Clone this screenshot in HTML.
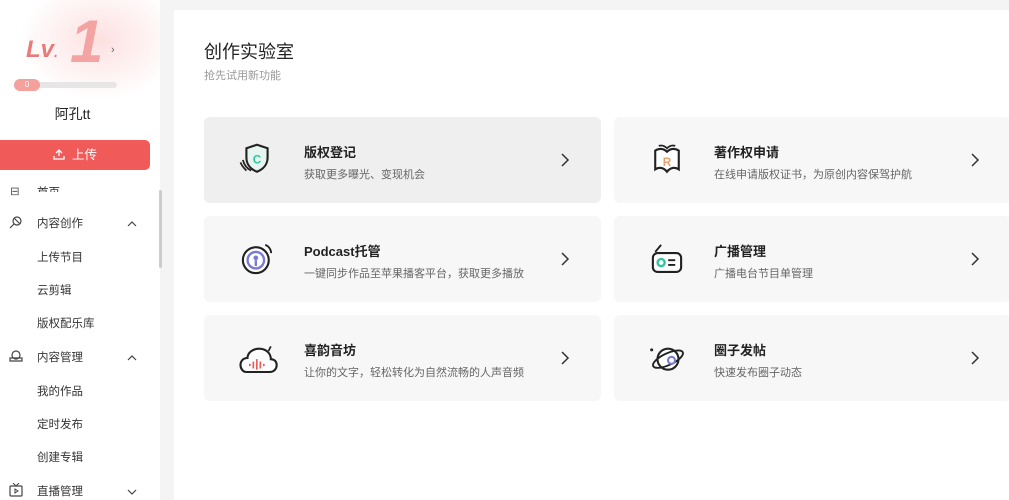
<!DOCTYPE html>
<html><head><meta charset="utf-8"><style>
*{margin:0;padding:0;box-sizing:border-box}
body{width:1009px;height:500px;overflow:hidden;background:#f4f4f5;font-family:"Liberation Sans","Noto Sans CJK SC",sans-serif;color:#333;position:relative}
.side{position:absolute;left:0;top:0;width:160px;height:500px;background:#fff}
.sb{position:absolute;left:159px;top:190px;width:3px;height:78px;background:#ccc;border-radius:2px}
.main{position:absolute;left:174px;top:10px;width:835px;height:490px;background:#fff}
.card{position:absolute;width:397px;height:86px;background:#f7f7f7;border-radius:6px}
.card .t{position:absolute;left:100px;top:25px;font-size:13px;font-weight:bold;color:#222}
.card .d{position:absolute;left:100px;top:49px;font-size:11px;color:#666}
.card .a{position:absolute;left:356px;top:36px}
.card svg.i{position:absolute;left:33px;top:25px}
.nav{position:absolute;font-size:11.5px;color:#333}
.chev{position:absolute;left:127px}
</style></head><body>
<div class="side">
 <div style="position:absolute;left:0;top:0;width:160px;height:100px;background:radial-gradient(ellipse 80px 60px at 100px 40px,#fde0e0 0,#fff 100%)"></div>
 <div style="position:absolute;left:26px;top:36px;font-size:24px;font-style:italic;font-weight:bold;color:#e87a78">Lv<span style="font-size:14px">.</span></div>
 <div style="position:absolute;left:70px;top:10px;font-size:60px;font-style:italic;font-weight:bold;color:#f3a4a2;line-height:64px">1</div>
 <div style="position:absolute;left:111px;top:44px;font-size:11px;color:#666">›</div>
 <div style="position:absolute;left:15px;top:82px;width:102px;height:6px;background:#e6e6e6;border-radius:3px"></div>
 <div style="position:absolute;left:14px;top:79px;width:26px;height:12px;background:#f4a09d;border-radius:6px;color:#fff;font-size:8px;text-align:center;line-height:12px">0</div>
 <div style="position:absolute;left:0;width:145px;top:104px;text-align:center;font-size:14px;color:#222">阿孔tt</div>
 <div style="position:absolute;left:0;top:140px;width:150px;height:30px;background:#f05a58;border-radius:0 5px 5px 0;color:#fff;font-size:12.5px;line-height:30px;text-align:center"><svg width="12" height="12" viewBox="0 0 12 12" style="vertical-align:-1px"><path d="M6 8V2M3 5l3-3 3 3M1 8v3h10V8" stroke="#fff" stroke-width="1.3" fill="none"/></svg>&nbsp; 上传</div>
 <div class="nav" style="left:10px;top:184px;color:#555">⊟</div>
 <div class="nav" style="left:37px;top:184px;height:8px;overflow:hidden">首页</div>
 <svg class="nav" style="left:9px;top:215px" width="14" height="14" viewBox="0 0 14 14"><circle cx="8" cy="6" r="4" fill="none" stroke="#444" stroke-width="1.2"/><path d="M5 9l-4 4M5 3l6 6" stroke="#444" stroke-width="1.2"/></svg>
 <div class="nav" style="left:37px;top:215px">内容创作</div><svg class="chev" style="top:221px" width="10" height="6"><path d="M1 5l4-4 4 4" stroke="#444" stroke-width="1.2" fill="none"/></svg>
 <div class="nav" style="left:37px;top:249px">上传节目</div>
 <div class="nav" style="left:37px;top:282px">云剪辑</div>
 <div class="nav" style="left:37px;top:315px">版权配乐库</div>
 <svg class="nav" style="left:9px;top:349px" width="14" height="14" viewBox="0 0 14 14"><circle cx="7" cy="6" r="4" fill="none" stroke="#444" stroke-width="1.2"/><path d="M1 12h12v-3H1z" fill="none" stroke="#444" stroke-width="1.2"/></svg>
 <div class="nav" style="left:37px;top:349px">内容管理</div><svg class="chev" style="top:355px" width="10" height="6"><path d="M1 5l4-4 4 4" stroke="#444" stroke-width="1.2" fill="none"/></svg>
 <div class="nav" style="left:37px;top:383px">我的作品</div>
 <div class="nav" style="left:37px;top:416px">定时发布</div>
 <div class="nav" style="left:37px;top:449px">创建专辑</div>
 <svg class="nav" style="left:9px;top:483px" width="14" height="14" viewBox="0 0 14 14"><rect x="1" y="3" width="12" height="10" rx="1" fill="none" stroke="#444" stroke-width="1.2"/><path d="M4 0l3 3 3-3M6 6v4l3-2z" stroke="#444" stroke-width="1" fill="none"/></svg>
 <div class="nav" style="left:37px;top:483px">直播管理</div><svg class="chev" style="top:489px" width="10" height="6"><path d="M1 1l4 4 4-4" stroke="#444" stroke-width="1.2" fill="none"/></svg>
</div>
<div class="sb"></div>
<div class="main">
 <div style="position:absolute;left:30px;top:28px;font-size:18px;color:#222">创作实验室</div>
 <div style="position:absolute;left:30px;top:57px;font-size:11px;color:#999">抢先试用新功能</div>
</div>
<div style="position:absolute;left:0;top:0;width:1009px;height:500px">
<div class="card" style="left:204px;top:117px;background:#efefef">
 <svg class="i" width="40" height="36" viewBox="0 0 34 30"><path d="M17 2l9 3v8c0 6-4 10-9 12c-5-2-9-6-9-12V5z" fill="#e6f5ef" stroke="#222" stroke-width="1.8"/><path d="M5 15c1 4 3 7 7 9M3 17c1 3 3 5 5 7" stroke="#222" stroke-width="1.5" fill="none"/><text x="17" y="18" font-size="10" font-weight="bold" fill="#2bc6a0" text-anchor="middle" font-family="Liberation Sans">C</text></svg>
 <div class="t">版权登记</div><div class="d">获取更多曝光、变现机会</div>
 <svg class="a" width="10" height="14"><path d="M2 1l6 6-6 6" stroke="#333" stroke-width="1.5" fill="none"/></svg></div>
<div class="card" style="left:614px;top:117px">
 <svg class="i" width="40" height="36" viewBox="0 0 34 30"><path d="M7 7c3-2 7-2 10 1c3-3 7-3 10-1v16c-3-2-7-2-10 2c-3-4-7-4-10-2z" fill="#fff" stroke="#222" stroke-width="1.8"/><path d="M10 3c3-1 5 0 7 2c2-2 4-3 7-2" stroke="#222" stroke-width="1.5" fill="none"/><text x="17" y="20" font-size="10" font-weight="bold" fill="#e8a06a" text-anchor="middle" font-family="Liberation Sans">R</text></svg>
 <div class="t">著作权申请</div><div class="d">在线申请版权证书，为原创内容保驾护航</div>
 <svg class="a" width="10" height="14"><path d="M2 1l6 6-6 6" stroke="#333" stroke-width="1.5" fill="none"/></svg></div>
<div class="card" style="left:204px;top:216px">
 <svg class="i" width="40" height="36" viewBox="0 0 34 30"><circle cx="16" cy="16" r="11" fill="#fff" stroke="#222" stroke-width="1.8"/><circle cx="16" cy="16" r="7" fill="none" stroke="#7a78d8" stroke-width="2"/><circle cx="16" cy="14" r="2" fill="#7a78d8"/><path d="M16 16v5" stroke="#7a78d8" stroke-width="2"/><path d="M24 3c3 1 5 4 5 7" stroke="#222" stroke-width="1.6" fill="none"/></svg>
 <div class="t">Podcast托管</div><div class="d">一键同步作品至苹果播客平台，获取更多播放</div>
 <svg class="a" width="10" height="14"><path d="M2 1l6 6-6 6" stroke="#333" stroke-width="1.5" fill="none"/></svg></div>
<div class="card" style="left:614px;top:216px">
 <svg class="i" width="40" height="36" viewBox="0 0 34 30"><rect x="5" y="10" width="24" height="16" rx="4" fill="#fff" stroke="#222" stroke-width="1.8"/><path d="M7 9l5-6" stroke="#222" stroke-width="1.6"/><circle cx="12" cy="18" r="3" fill="none" stroke="#2bc6a0" stroke-width="2"/><path d="M18 16h6M18 20h6" stroke="#222" stroke-width="1.6"/></svg>
 <div class="t">广播管理</div><div class="d">广播电台节目单管理</div>
 <svg class="a" width="10" height="14"><path d="M2 1l6 6-6 6" stroke="#333" stroke-width="1.5" fill="none"/></svg></div>
<div class="card" style="left:204px;top:315px">
 <svg class="i" width="42" height="36" viewBox="0 0 36 30"><path d="M8 27h20c4 0 6-3 6-6s-2-5-5-5c0-5-4-9-10-9s-10 4-10 8c-4 0-6 3-6 6s2 6 5 6z" fill="#fff" stroke="#222" stroke-width="1.8"/><path d="M27 9l2-4" stroke="#222" stroke-width="1.5"/><path d="M11 20v2M14 18v6M17 16v9M20 18v6M23 20v2" stroke="#e85a58" stroke-width="1.4"/></svg>
 <div class="t">喜韵音坊</div><div class="d">让你的文字，轻松转化为自然流畅的人声音频</div>
 <svg class="a" width="10" height="14"><path d="M2 1l6 6-6 6" stroke="#333" stroke-width="1.5" fill="none"/></svg></div>
<div class="card" style="left:614px;top:315px">
 <svg class="i" width="42" height="36" viewBox="0 0 36 30"><circle cx="18" cy="16" r="9" fill="#fff" stroke="#222" stroke-width="1.8"/><ellipse cx="18" cy="16" rx="14" ry="5" fill="none" stroke="#222" stroke-width="1.6" transform="rotate(-25 18 16)"/><circle cx="21" cy="17" r="3" fill="#fff" stroke="#7a78d8" stroke-width="1.8"/><circle cx="4" cy="8" r="1.3" fill="#222"/></svg>
 <div class="t">圈子发帖</div><div class="d">快速发布圈子动态</div>
 <svg class="a" width="10" height="14"><path d="M2 1l6 6-6 6" stroke="#333" stroke-width="1.5" fill="none"/></svg></div>
</div>
</body></html>
